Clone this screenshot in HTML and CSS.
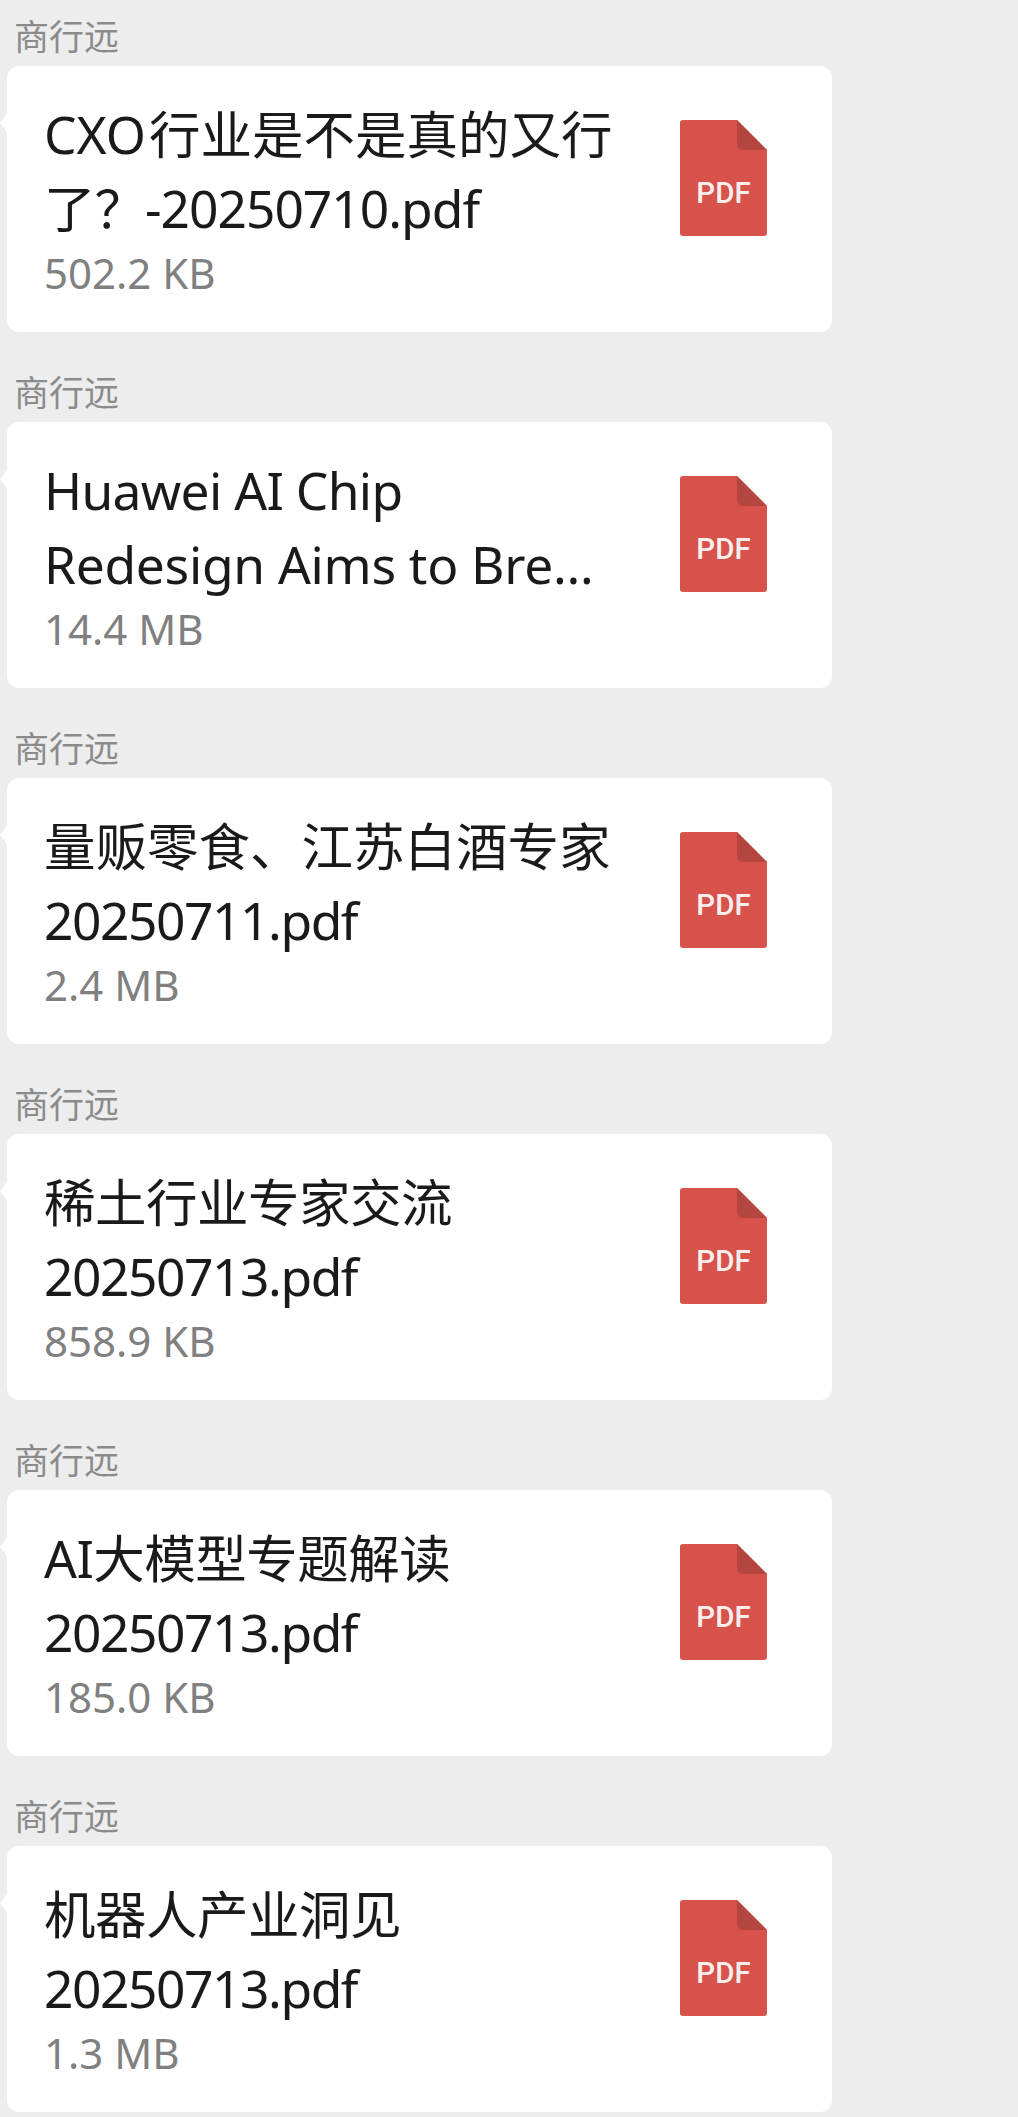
FILE: index.html
```html
<!DOCTYPE html>
<html lang="zh-CN">
<head>
  <meta charset="UTF-8" />
  <meta name="viewport" content="width=device-width, initial-scale=1" />
  <title>商行远</title>
  <link rel="stylesheet" href="styles.css">
</head>
<body>
  <svg class="icon-defs" width="0" height="0" aria-hidden="true">
    <symbol id="pdf-icon" viewBox="0 0 87 116">
      <path d="M3 0H57L87 30V113A3 3 0 0 1 84 116H3A3 3 0 0 1 0 113V3A3 3 0 0 1 3 0Z" fill="#d6524a"/>
      <path d="M57 0L87 30H63A6 6 0 0 1 57 24Z" fill="#b3463e"/>
    </symbol>
  </svg>

  <div class="chat">
    <div class="message">
      <div class="sender">商行远</div>
      <div class="card">
        <div class="file-info">
          <div class="file-name"><div><span class="cxo">CXO</span>行业是不是真的又行</div><div class="date-mixed">了？-20250710.pdf</div></div>
          <div class="file-size">502.2 KB</div>
        </div>
        <div class="file-icon"><svg class="pdf-shape"><use href="#pdf-icon"/></svg><span class="pdf-label">PDF</span></div>
      </div>
    </div>

    <div class="message">
      <div class="sender">商行远</div>
      <div class="card">
        <div class="file-info">
          <div class="file-name"><div class="latin-short">Huawei AI Chip</div><div class="latin-long">Redesign Aims to Bre…</div></div>
          <div class="file-size">14.4 MB</div>
        </div>
        <div class="file-icon"><svg class="pdf-shape"><use href="#pdf-icon"/></svg><span class="pdf-label">PDF</span></div>
      </div>
    </div>

    <div class="message">
      <div class="sender">商行远</div>
      <div class="card">
        <div class="file-info">
          <div class="file-name"><div>量贩零食、江苏白酒专家</div><div class="date">20250711.pdf</div></div>
          <div class="file-size">2.4 MB</div>
        </div>
        <div class="file-icon"><svg class="pdf-shape"><use href="#pdf-icon"/></svg><span class="pdf-label">PDF</span></div>
      </div>
    </div>

    <div class="message">
      <div class="sender">商行远</div>
      <div class="card">
        <div class="file-info">
          <div class="file-name"><div class="cjk-tight">稀土行业专家交流</div><div class="date">20250713.pdf</div></div>
          <div class="file-size">858.9 KB</div>
        </div>
        <div class="file-icon"><svg class="pdf-shape"><use href="#pdf-icon"/></svg><span class="pdf-label">PDF</span></div>
      </div>
    </div>

    <div class="message">
      <div class="sender">商行远</div>
      <div class="card">
        <div class="file-info">
          <div class="file-name"><div class="cjk-tight">AI大模型专题解读</div><div class="date">20250713.pdf</div></div>
          <div class="file-size">185.0 KB</div>
        </div>
        <div class="file-icon"><svg class="pdf-shape"><use href="#pdf-icon"/></svg><span class="pdf-label">PDF</span></div>
      </div>
    </div>

    <div class="message">
      <div class="sender">商行远</div>
      <div class="card">
        <div class="file-info">
          <div class="file-name"><div class="cjk-tight">机器人产业洞见</div><div class="date">20250713.pdf</div></div>
          <div class="file-size">1.3 MB</div>
        </div>
        <div class="file-icon"><svg class="pdf-shape"><use href="#pdf-icon"/></svg><span class="pdf-label">PDF</span></div>
      </div>
    </div>
  </div>
</body>
</html>
```
FILE: styles.css
```css
* {
  box-sizing: border-box;
  margin: 0;
  padding: 0;
}

html, body {
  height: 100%;
}

body {
  background: #ededed;
  font-family: "Noto Sans", "Noto Sans CJK SC", sans-serif;
  overflow: hidden;
}

.icon-defs {
  position: absolute;
}

.chat {
  display: flex;
  flex-direction: column;
  gap: 24px;
}

.message {
  display: flex;
  flex-direction: column;
  height: 332px;
}

.sender {
  height: 66px;
  padding: 14px 0 0 14px;
  font-size: 35px;
  line-height: 46px;
  color: #8b8b8b;
}

.card {
  position: relative;
  display: flex;
  justify-content: space-between;
  margin-left: 7px;
  width: 825px;
  height: 266px;
  padding: 31px 65px 0 37px;
  background: #fff;
  border-radius: 12px;
}

/* little bubble tail on the left edge */
.card::before {
  content: '';
  position: absolute;
  left: -7px;
  top: 45px;
  width: 9px;
  height: 24px;
  background: #fff;
  clip-path: polygon(100% 0, 0 50%, 100% 100%);
}

.file-name {
  font-size: 51.5px;
  line-height: 74px;
  color: #1a1a1a;
  white-space: nowrap;
}

.date { letter-spacing: -1.45px; }
.date-mixed { letter-spacing: -1px; }
.latin-short { letter-spacing: -0.7px; }
.latin-long { letter-spacing: -0.3px; }
.cjk-tight { letter-spacing: -0.5px; }

.cxo {
  margin-right: 3px;
}

.file-size {
  font-size: 42px;
  line-height: 52px;
  margin-top: 2px;
  color: #808080;
}

.file-icon {
  position: relative;
  flex-shrink: 0;
  width: 87px;
  height: 116px;
  margin-top: 23px;
}

.pdf-shape {
  display: block;
  width: 87px;
  height: 116px;
}

.pdf-label {
  position: absolute;
  left: 0;
  right: 0;
  top: 55px;
  text-align: center;
  font-family: Roboto, sans-serif;
  font-size: 29.5px;
  line-height: 36px;
  font-weight: 500;
  color: #fbeeed;
}
```
